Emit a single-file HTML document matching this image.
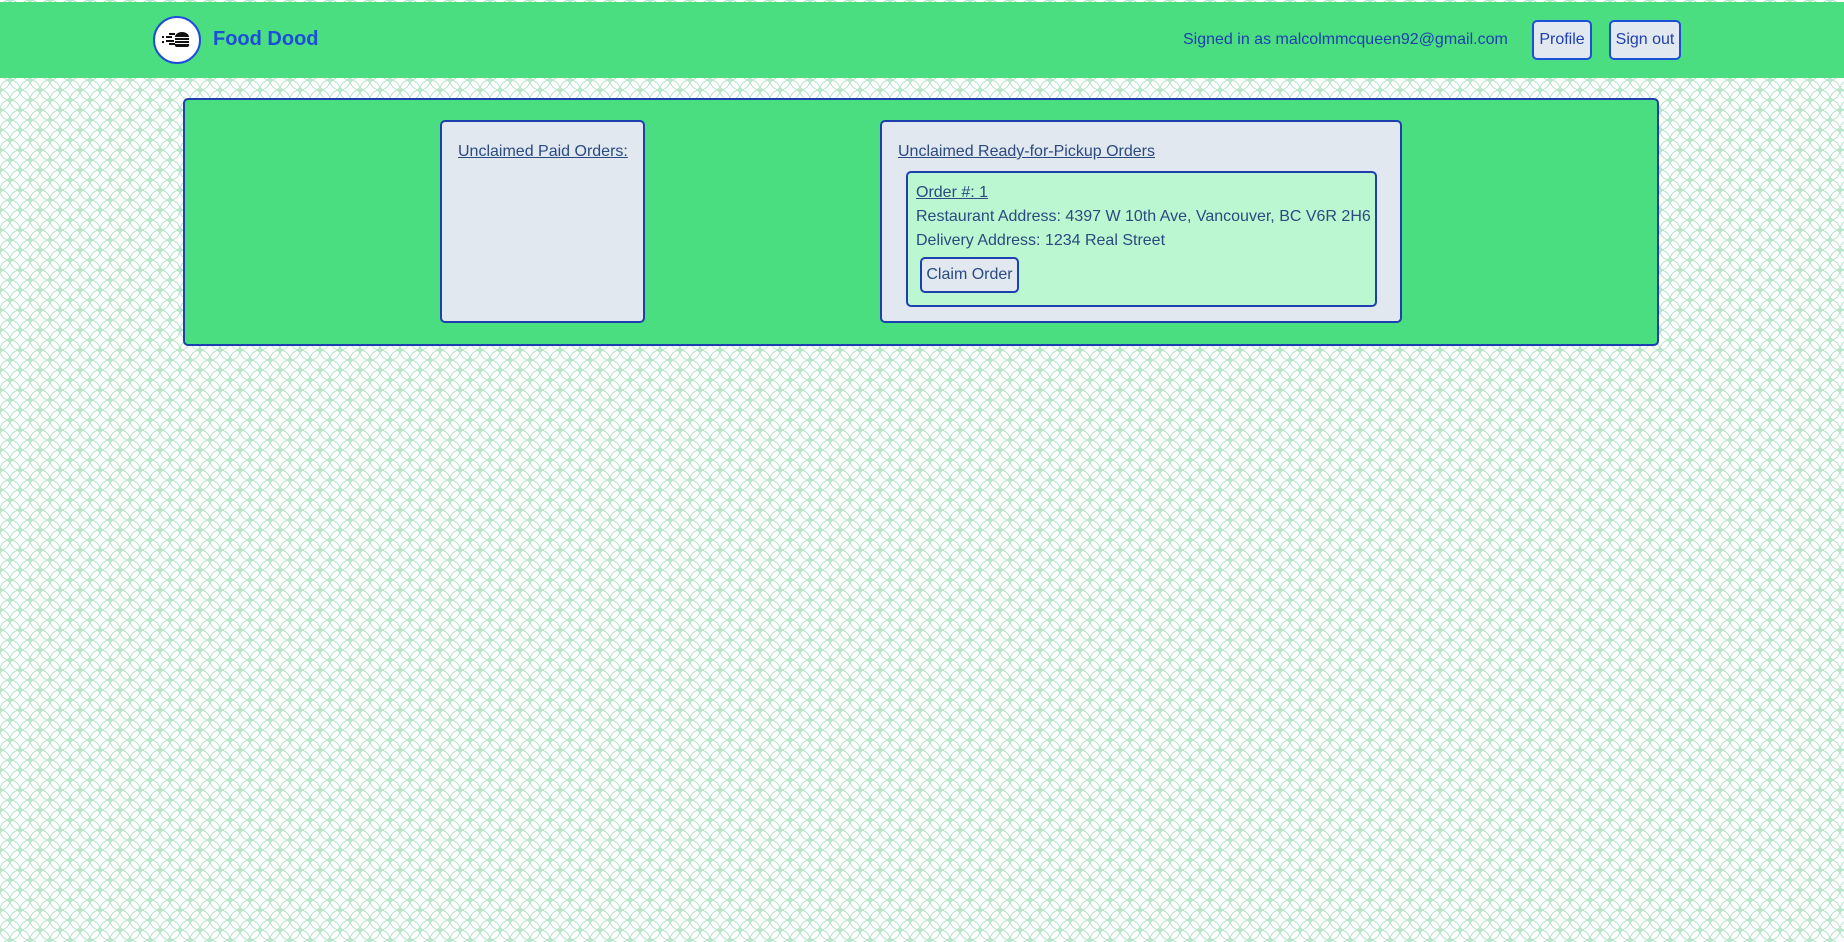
<!DOCTYPE html>
<html><head><meta charset="utf-8"><style>
*{box-sizing:border-box;margin:0;padding:0}
body{width:1844px;height:942px;overflow:hidden;position:relative;font-family:"Liberation Sans",sans-serif;background:#fff}
#bg{position:absolute;left:0;top:0}
.hdr{position:absolute;left:0;top:2px;width:1844px;height:76px;background:#4ade80}
.abs{position:absolute}
.txt{color:#2a4a80;font-size:16px;white-space:nowrap}
.btn{position:absolute;border:2px solid #1d4ed8;border-radius:5px;background:#e2e8f0;color:#1e40af;font-size:16px;display:flex;align-items:center;justify-content:center;white-space:nowrap}
.card{position:absolute;background:#e2e8f0;border:2px solid #1e40af;border-radius:5px}
u{text-decoration:underline}
</style></head><body>
<svg id="bg" width="1844" height="942"><defs><pattern id="p" width="20" height="20" patternUnits="userSpaceOnUse">
<g fill="none" stroke="#b3e3c6" stroke-width="1">
<circle cx="0" cy="0" r="10"/><circle cx="20" cy="0" r="10"/><circle cx="0" cy="20" r="10"/><circle cx="20" cy="20" r="10"/><circle cx="10" cy="10" r="10"/>
<path d="M10 -2.5L12.5 0L10 2.5L7.5 0Z M10 17.5L12.5 20L10 22.5L7.5 20Z M0 7.5L2.5 10L0 12.5L-2.5 10Z M20 7.5L22.5 10L20 12.5L17.5 10Z"/></g></pattern></defs>
<rect width="1844" height="942" fill="url(#p)"/></svg>
<div class="hdr"></div>
<div class="abs" style="left:153px;top:16px;width:48px;height:48px;border-radius:50%;background:#fff;border:2px solid #1d4ed8"></div>
<svg class="abs" style="left:160px;top:28px" width="36" height="24"><g fill="#111">
<rect x="2" y="8" width="2" height="2"/><rect x="2" y="13" width="2" height="2"/><rect x="6" y="8" width="6" height="2"/><rect x="6" y="12" width="8" height="2"/><rect x="9" y="5" width="6" height="2"/><rect x="9" y="15" width="6" height="2"/>
<path d="M15 9a7 5 0 0 1 14 0z"/><rect x="15" y="10" width="14" height="2"/><rect x="15" y="13" width="14" height="2"/><path d="M15 16h14a2 2 0 0 1-2 3h-10a2 2 0 0 1-2-3z"/></g></svg>
<div class="abs" style="left:213px;top:28px;font-size:20px;font-weight:bold;color:#1d4ed8">Food Dood</div>
<div class="abs" style="left:1183px;top:31px;font-size:16px;color:#1e40af;white-space:nowrap">Signed in as malcolmmcqueen92@gmail.com</div>
<div class="btn" style="left:1532px;top:20px;width:60px;height:40px">Profile</div>
<div class="btn" style="left:1609px;top:20px;width:72px;height:40px">Sign out</div>
<div class="abs" style="left:183px;top:98px;width:1476px;height:248px;background:#4ade80;border:2px solid #1e40af;border-radius:5px"></div>
<div class="card" style="left:440px;top:120px;width:205px;height:203px"><div class="txt abs" style="left:16px;top:21px"><u>Unclaimed Paid Orders:</u></div></div>
<div class="card" style="left:880px;top:120px;width:522px;height:203px">
<div class="txt abs" style="left:16px;top:21px"><u>Unclaimed Ready-for-Pickup Orders</u></div>
<div class="abs" style="left:24px;top:49px;width:471px;height:136px;background:#bbf7d0;border:2px solid #1e40af;border-radius:5px">
<div class="txt abs" style="left:8px;top:11px"><u>Order #: 1</u></div>
<div class="txt abs" style="left:8px;top:35px">Restaurant Address: 4397 W 10th Ave, Vancouver, BC V6R 2H6</div>
<div class="txt abs" style="left:8px;top:59px">Delivery Address: 1234 Real Street</div>
<div class="btn" style="left:12px;top:84px;width:99px;height:36px;color:#2a4a80;border-color:#1e40af">Claim Order</div>
</div></div>
</body></html>
